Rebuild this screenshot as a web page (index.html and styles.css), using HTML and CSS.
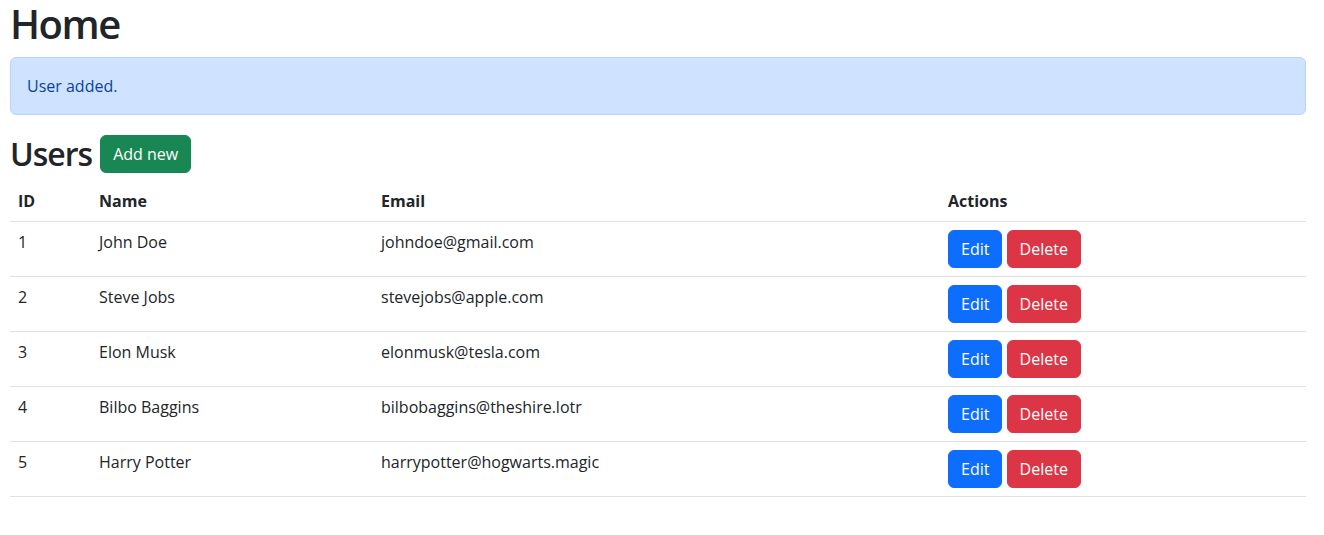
FILE: index.html
```html
<!DOCTYPE html>
<html lang="en">
<head>
<meta charset="utf-8">
<title>Home</title>
<link rel="stylesheet" href="styles.css">
</head>
<body>
<main class="page">
  <h1 class="title">Home</h1>
  <div class="alert">User added.</div>
  <div class="section-head">
    <h2 class="subtitle">Users</h2>
    <a class="btn btn-success" href="#">Add new</a>
  </div>
  <table class="table">
    <thead>
      <tr>
        <th class="c-id">ID</th>
        <th class="c-name">Name</th>
        <th class="c-email">Email</th>
        <th class="c-actions">Actions</th>
      </tr>
    </thead>
    <tbody>
      <tr>
        <td>1</td><td>John Doe</td><td>johndoe@gmail.com</td>
        <td><a class="btn btn-primary" href="#">Edit</a> <a class="btn btn-danger" href="#">Delete</a></td>
      </tr>
      <tr>
        <td>2</td><td>Steve Jobs</td><td>stevejobs@apple.com</td>
        <td><a class="btn btn-primary" href="#">Edit</a> <a class="btn btn-danger" href="#">Delete</a></td>
      </tr>
      <tr>
        <td>3</td><td>Elon Musk</td><td>elonmusk@tesla.com</td>
        <td><a class="btn btn-primary" href="#">Edit</a> <a class="btn btn-danger" href="#">Delete</a></td>
      </tr>
      <tr>
        <td>4</td><td>Bilbo Baggins</td><td>bilbobaggins@theshire.lotr</td>
        <td><a class="btn btn-primary" href="#">Edit</a> <a class="btn btn-danger" href="#">Delete</a></td>
      </tr>
      <tr>
        <td>5</td><td>Harry Potter</td><td>harrypotter@hogwarts.magic</td>
        <td><a class="btn btn-primary" href="#">Edit</a> <a class="btn btn-danger" href="#">Delete</a></td>
      </tr>
    </tbody>
  </table>
</main>
</body>
</html>
```
FILE: styles.css
```css
* { box-sizing: border-box; }
html, body { margin: 0; padding: 0; background: #fff; }
body {
  font-family: "Open Sans", "Noto Sans", sans-serif;
  font-size: 16px;
  line-height: 1.5;
  color: #212529;
}
.page { padding: 0 18px 0 10px; }
.title {
  font-size: 40px;
  font-weight: 600;
  line-height: 1.2;
  letter-spacing: -1.5px;
  margin: 0 0 9px;
}
.alert {
  background: #cfe2ff;
  border: 1px solid #b6d4fe;
  color: #084298;
  border-radius: 6px;
  padding: 16px;
  margin-bottom: 16px;
}
.section-head {
  display: flex;
  align-items: center;
  gap: 8px;
  padding-top: 4px;
  margin-bottom: 8px;
}
.subtitle {
  font-size: 32px;
  font-weight: 600;
  line-height: 1.2;
  letter-spacing: -1px;
  margin: 0;
}
.btn {
  display: inline-block;
  padding: 6px 12px;
  font-size: 16px;
  line-height: 24px;
  border-radius: 6px;
  border: 1px solid transparent;
  color: #fff;
  text-decoration: none;
  vertical-align: middle;
}
.btn-success { background: #198754; border-color: #198754; }
.btn-primary { background: #0d6efd; border-color: #0d6efd; }
.btn-danger { background: #dc3545; border-color: #dc3545; }
.table {
  width: 100%;
  border-collapse: collapse;
  margin-bottom: 16px;
}
.table th, .table td {
  text-align: left;
  vertical-align: top;
  padding: 8px;
  border-bottom: 1px solid #dee2e6;
}
.table th { font-weight: 700; }
.c-id { width: 81px; }
.c-name { width: 282px; }
.c-email { width: 567px; }
```
